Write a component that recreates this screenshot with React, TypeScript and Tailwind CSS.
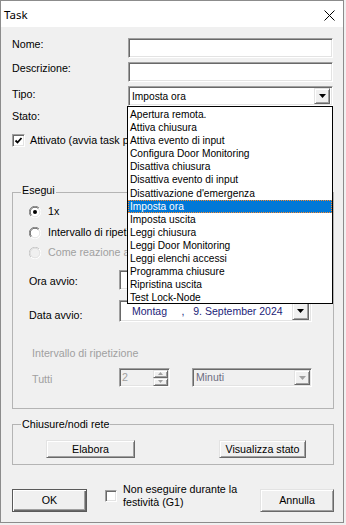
import React from 'react';

const font = "font-['Liberation_Sans',Arial,sans-serif]";

const sunken =
  'border border-t-[#a0a0a0] border-l-[#a0a0a0] border-r-white border-b-white shadow-[inset_1px_1px_0_#696969,inset_-1px_-1px_0_#e3e3e3]';
const raised =
  'border border-t-[#e3e3e3] border-l-[#e3e3e3] border-r-[#696969] border-b-[#696969] shadow-[inset_1px_1px_0_#ffffff,inset_-1px_-1px_0_#a0a0a0] bg-[#f0f0f0]';

const tipoItems = [
  'Apertura remota.',
  'Attiva chiusura',
  'Attiva evento di input',
  'Configura Door Monitoring',
  'Disattiva chiusura',
  'Disattiva evento di input',
  "Disattivazione d'emergenza",
  'Imposta ora',
  'Imposta uscita',
  'Leggi chiusura',
  'Leggi Door Monitoring',
  'Leggi elenchi accessi',
  'Programma chiusure',
  'Ripristina uscita',
  'Test Lock-Node',
];

const Arrow = ({ disabled = false }: { disabled?: boolean }) => (
  <svg width="7" height="4" viewBox="0 0 7 4">
    <polygon points="0,0 7,0 3.5,4" fill={disabled ? '#a0a0a0' : '#000'} />
  </svg>
);

const DropButton = ({ disabled = false, className = '' }: { disabled?: boolean; className?: string }) => (
  <div className={`${raised} flex items-center justify-center ${className}`}>
    <Arrow disabled={disabled} />
  </div>
);

const CheckBox = ({ checked = false, size = 13 }: { checked?: boolean; size?: number }) => (
  <div
    className={`${sunken} bg-white flex items-center justify-center shrink-0 ${size === 13 ? 'w-[13px] h-[13px]' : 'w-[12px] h-[12px]'}`}
  >
    {checked && (
      <svg width="9" height="9" viewBox="0 0 9 9">
        <polyline points="1.5,4.5 3.5,6.5 7.5,2" fill="none" stroke="#000" strokeWidth="1.8" />
      </svg>
    )}
  </div>
);

const Radio = ({ checked = false, disabled = false }: { checked?: boolean; disabled?: boolean }) => (
  <svg width="12" height="12" viewBox="0 0 12 12" className="shrink-0">
    <circle cx="6" cy="6" r="5.5" fill={disabled ? '#f0f0f0' : '#fff'} />
    <path d="M1.9 10.1 A5.5 5.5 0 0 1 10.1 1.9" fill="none" stroke={disabled ? '#c8c8c8' : '#8a8a8a'} strokeWidth="1" />
    <path d="M2.6 9.4 A4.5 4.5 0 0 1 9.4 2.6" fill="none" stroke={disabled ? '#dcdcdc' : '#5f5f5f'} strokeWidth="1" />
    <path d="M10.1 1.9 A5.5 5.5 0 0 1 1.9 10.1" fill="none" stroke="#ffffff" strokeWidth="1" />
    <path d="M9.4 2.6 A4.5 4.5 0 0 1 2.6 9.4" fill="none" stroke="#e3e3e3" strokeWidth="1" />
    {checked && <circle cx="6" cy="6" r="2" fill="#000" />}
  </svg>
);

const Button = ({ label, className = '', isDefault = false }: { label: string; className?: string; isDefault?: boolean }) => (
  <div
    className={`flex items-center justify-center bg-[#f0f0f0] text-black ${
      isDefault
        ? 'border border-[#5a5a5a] shadow-[inset_1px_1px_0_#ffffff,inset_-1px_-1px_0_#696969,inset_-2px_-2px_0_#a0a0a0]'
        : raised
    } ${className}`}
  >
    {label}
  </div>
);

export default function App() {
  return (
    <div className={`w-[346px] h-[525px] bg-[#f0f0f0] ${font} text-[10.7px] text-black leading-[13px]`}>
      <div className="relative w-[344px] h-[523px] border border-[#8c8c8c] flex flex-col">
        {/* title bar */}
        <div className="h-[26px] bg-white flex items-center justify-between pl-[3px] pr-[8px] shrink-0">
          <span className="font-['Noto_Sans',sans-serif] text-[11.5px]">Task</span>
          <svg width="11" height="11" viewBox="0 0 11 11" className="mt-[2px]">
            <path d="M0.5 0.5 L10.5 10.5 M10.5 0.5 L0.5 10.5" stroke="#000" strokeWidth="1" />
          </svg>
        </div>

        <div className="flex flex-col pl-[11px]">
          <div className="flex h-[20px] mt-[11px]">
            <span className="w-[116px]">Nome:</span>
            <div className={`${sunken} bg-white w-[205px] h-[20px]`} />
          </div>
          <div className="flex h-[20px] mt-[4px]">
            <span className="w-[116px]">Descrizione:</span>
            <div className={`${sunken} bg-white w-[205px] h-[20px]`} />
          </div>
          <div className="flex h-[20px] mt-[4px]">
            <span className="w-[116px] mt-[2px]">Tipo:</span>
            <div className={`${sunken} bg-white w-[205px] h-[20px] flex items-center justify-between pl-[3px] pr-[2px]`}>
              <span className="text-[10.2px]">Imposta ora</span>
              <DropButton className="w-[16px] h-[16px]" />
            </div>
          </div>
          <div className="mt-[4px] h-[13px]">Stato:</div>
          <div className="flex items-center h-[13px] mt-[11px] whitespace-nowrap">
            <CheckBox checked />
            {/* only the part left of the open list is visible */}
            <span className="ml-[5px]">Attivato (avvia task p</span>
          </div>

          {/* Esegui */}
          <div className="relative mt-[45px] w-[322px] h-[217px] border border-[#b4b4b4] flex flex-col">
            <span className="absolute -top-[9px] left-[8px] px-[1px] bg-[#f0f0f0]">Esegui</span>
            <div className="flex items-center h-[13px] mt-[12px] pl-[16px]">
              <Radio checked />
              <span className="ml-[7px]">1x</span>
            </div>
            <div className="flex items-center h-[13px] mt-[8px] pl-[16px] whitespace-nowrap">
              <Radio />
              <span className="ml-[7px]">Intervallo di ripeti</span>
            </div>
            <div className="flex items-center h-[13px] mt-[7px] pl-[16px] text-[#a0a0a0] whitespace-nowrap">
              <Radio disabled />
              <span className="ml-[7px]">Come reazione a</span>
            </div>
            <div className="flex h-[20px] mt-[11px] pl-[16px]">
              <span className="w-[90px] mt-[5px]">Ora avvio:</span>
              <div className={`${sunken} bg-white w-[193px] h-[20px]`} />
            </div>
            <div className="flex h-[22px] mt-[10px] pl-[16px]">
              <span className="w-[90px] mt-[9px]">Data avvio:</span>
              <div className={`${sunken} bg-white w-[193px] h-[22px] flex items-center justify-between pl-[12px] pr-[2px]`}>
                <span className="text-[10.5px] text-[#1c1c78] whitespace-pre">Montag     ,   9. September 2024</span>
                <DropButton className="w-[17px] h-[18px]" />
              </div>
            </div>
            <div className="mt-[25px] pl-[19px] h-[13px] text-[#a0a0a0]">Intervallo di ripetizione</div>
            <div className="flex h-[19px] mt-[8px] pl-[19px] text-[#a0a0a0]">
              <span className="w-[87px] mt-[5px]">Tutti</span>
              <div className={`${sunken} bg-[#f0f0f0] w-[51px] h-[19px] flex items-center justify-between pl-[2px] pr-[1px]`}>
                <span>2</span>
                <div className="flex flex-col w-[15px] h-[16px]">
                  <div className={`${raised} h-[8px] flex items-center justify-center`}>
                    <svg width="5" height="3" viewBox="0 0 5 3">
                      <polygon points="0,3 5,3 2.5,0" fill="#a0a0a0" />
                    </svg>
                  </div>
                  <div className={`${raised} h-[8px] flex items-center justify-center`}>
                    <svg width="5" height="3" viewBox="0 0 5 3">
                      <polygon points="0,0 5,0 2.5,3" fill="#a0a0a0" />
                    </svg>
                  </div>
                </div>
              </div>
              <div className={`${sunken} bg-[#f0f0f0] ml-[22px] w-[120px] h-[19px] flex items-center justify-between pl-[3px] pr-[1px]`}>
                <span className="text-[10.5px] text-[#6d6d80]">Minuti</span>
                <DropButton disabled className="w-[16px] h-[15px]" />
              </div>
            </div>
          </div>

          {/* Chiusure/nodi rete */}
          <div className="relative mt-[15px] w-[322px] h-[41px] border border-[#b4b4b4] flex pt-[15px]">
            <span className="absolute -top-[7px] left-[8px] px-[1px] bg-[#f0f0f0]">Chiusure/nodi rete</span>
            <Button label="Elabora" className="ml-[33px] w-[89px] h-[18px]" />
            <Button label="Visualizza stato" className="ml-[84px] w-[87px] h-[18px]" />
          </div>

          {/* bottom buttons */}
          <div className="flex items-start w-[322px] mt-[24px]">
            <Button label="OK" isDefault className="w-[75px] h-[23px]" />
            <div className="ml-[18px] mt-[1px]">
              <CheckBox size={12} />
            </div>
            <div className="ml-[6px] -mt-[6px] leading-[12.7px]">
              <div>Non eseguire durante la</div>
              <div>festività (G1)</div>
            </div>
            <Button label="Annulla" className="ml-auto w-[74px] h-[23px]" />
          </div>
        </div>

        {/* open Tipo dropdown list */}
        <div className="absolute left-[126px] top-[105px] w-[206px] h-[198px] bg-white border border-black flex flex-col pt-[1px] text-[10.2px] leading-[13.1px]">
          {tipoItems.map((t) => (
            <div
              key={t}
              className={`h-[13.1px] px-[2px] whitespace-nowrap ${
                t === 'Imposta ora'
                  ? 'bg-[#0078d7] text-white outline outline-1 outline-dotted outline-[#ff8a28] -outline-offset-1'
                  : ''
              }`}
            >
              {t}
            </div>
          ))}
        </div>
      </div>
    </div>
  );
}
